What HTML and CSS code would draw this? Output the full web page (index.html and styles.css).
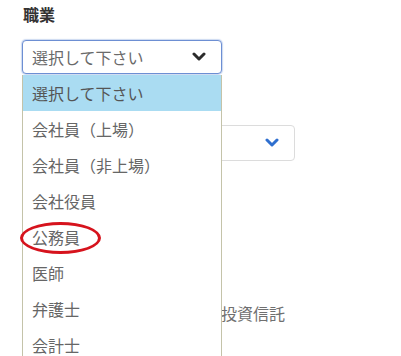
FILE: index.html
```html
<!DOCTYPE html>
<html lang="ja">
<head>
<meta charset="utf-8">
<link rel="stylesheet" href="styles.css">
</head>
<body>
<div class="page">
  <div class="label">職業</div>
  <div class="select-wrap">
    <div class="select focused">
      <span class="value">選択して下さい</span>
      <svg class="chev" width="14" height="10" viewBox="0 0 14 10"><polyline points="2,2 7,7 12,2" fill="none" stroke="#2b2b2b" stroke-width="3" stroke-linecap="round" stroke-linejoin="round"/></svg>
    </div>
    <ul class="list">
      <li class="item active">選択して下さい</li>
      <li class="item">会社員（上場）</li>
      <li class="item">会社員（非上場）</li>
      <li class="item">会社役員</li>
      <li class="item marked">公務員<span class="ring"></span></li>
      <li class="item">医師</li>
      <li class="item">弁護士</li>
      <li class="item">会計士</li>
    </ul>
  </div>
  <div class="select second">
    <span class="value"></span>
    <svg class="chev" width="14" height="10" viewBox="0 0 14 10"><polyline points="2,2 7,7 12,2" fill="none" stroke="#2f6fcf" stroke-width="3" stroke-linecap="round" stroke-linejoin="round"/></svg>
  </div>
  <div class="option-text">投資信託</div>
</div>
</body>
</html>
```
FILE: styles.css
```css
html, body {
  margin: 0;
  padding: 0;
  background: #fff;
  font-family: "Noto Sans CJK JP", "Noto Sans", sans-serif;
  overflow: hidden;
}
.page {
  padding-left: 22px;
  height: 356px;
  box-sizing: border-box;
}
.label {
  padding-top: 4px;
  padding-left: 1px;
  font-size: 16px;
  line-height: 20px;
  font-weight: bold;
  color: #333;
  margin-bottom: 16px;
}
.select-wrap {
  position: relative;
  width: 200px;
  z-index: 2;
}
.select {
  height: 34px;
  box-sizing: border-box;
  border: 1px solid #ccc;
  border-radius: 4px;
  display: flex;
  align-items: center;
  justify-content: space-between;
  padding: 0 15px 0 9px;
  background: #fff;
}
.select.focused {
  border-color: #6d8fd3;
  box-shadow: 0 0 1px 1px rgba(110, 145, 215, 0.35);
}
.value {
  font-size: 16px;
  color: #6a6a6a;
  line-height: 20px;
}
.chev {
  display: block;
}
.list {
  position: absolute;
  left: 0;
  top: 35px;
  width: 200px;
  margin: 0;
  padding: 0;
  list-style: none;
  background: #fff;
  border-left: 1px solid #c4c3a9;
  border-right: 1px solid #c4c3a9;
  box-sizing: border-box;
}
.item {
  position: relative;
  height: 36px;
  line-height: 36px;
  padding-left: 9px;
  font-size: 16px;
  color: #666;
}
.item.active {
  background: #aadcf2;
  color: #555;
}
.ring {
  position: absolute;
  left: -3px;
  top: 3px;
  width: 81px;
  height: 32px;
  box-sizing: border-box;
  border: 3.5px solid #d6131d;
  border-radius: 50%;
}
.select.second {
  width: 273px;
  height: 36px;
  margin-top: 51px;
  border-color: #dcdcdc;
  padding-right: 15px;
}
.option-text {
  margin-top: 142px;
  padding-left: 199px;
  font-size: 16px;
  line-height: 20px;
  color: #707070;
}
```
